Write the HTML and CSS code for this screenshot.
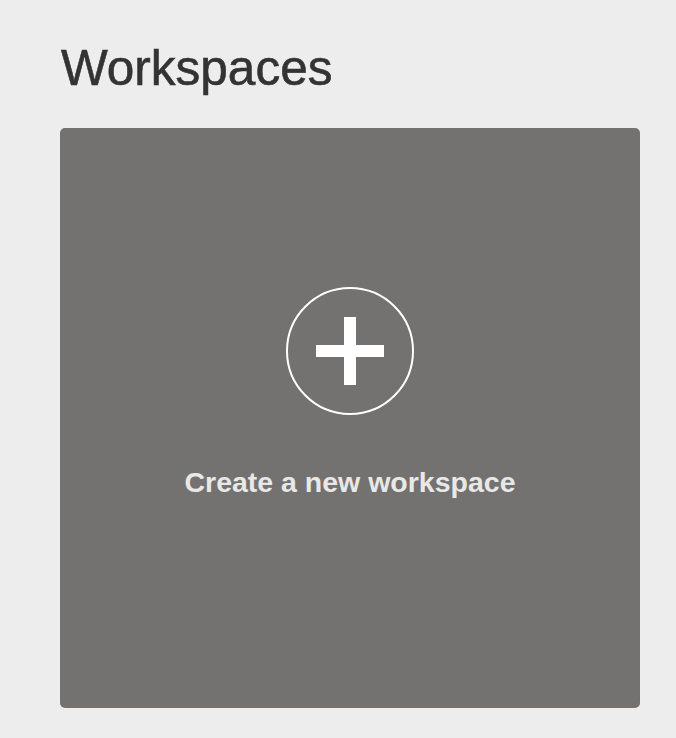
FILE: index.html
```html
<!DOCTYPE html>
<html lang="en">
<head>
    <meta charset="UTF-8">
    <meta name="viewport" content="width=device-width, initial-scale=1.0">
    <title>Workspaces</title>
    <link rel="stylesheet" href="styles.css">
</head>
<body>
    <h1 class="title">Workspaces</h1>
    <div class="new-card">
        <svg class="plus-icon" width="128" height="128" viewBox="0 0 128 128">
            <circle cx="64" cy="64" r="63" fill="none" stroke="#fff" stroke-width="2"/>
            <rect x="30" y="58" width="68" height="12" fill="#fff"/>
            <rect x="58" y="30" width="12" height="68" fill="#fff"/>
        </svg>
        <div class="new-label">Create a new workspace</div>
    </div>
</body>
</html>
```

FILE: styles.css
```css
body {
    font-family: "Liberation Sans", Arial, sans-serif;
    background: #ededed;
    margin: 0;
    padding: 0 60px;
}
.title {
    font-size: 49.5px;
    font-weight: normal;
    line-height: 56px;
    color: #333;
    -webkit-text-stroke: 0.6px #333;
    margin: 40px 0 32px 1px;
}
.new-card {
    width: 580px;
    height: 580px;
    box-sizing: border-box;
    background: #737270;
    border-radius: 5px;
    display: flex;
    flex-direction: column;
    align-items: center;
    padding-top: 159px;
}
.plus-icon {
    display: block;
}
.new-label {
    margin-top: 51px;
    font-size: 28.5px;
    font-weight: bold;
    line-height: 32px;
    color: #e8e8e8;
}
```
